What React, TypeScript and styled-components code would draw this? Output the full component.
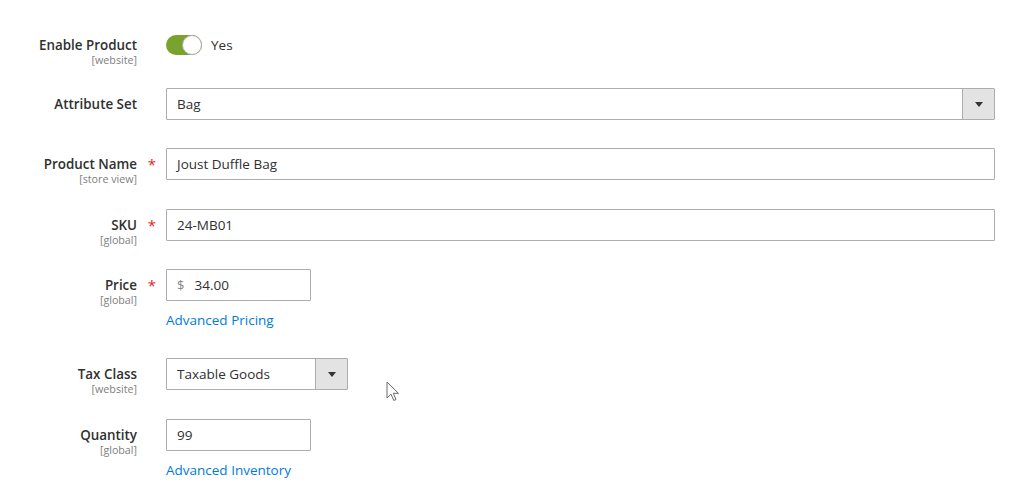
import React from "react";
import styled, { createGlobalStyle } from "styled-components";

const Global = createGlobalStyle`
  html, body { margin: 0; padding: 0; background: #fff; }
  body { font-family: "Open Sans", "Noto Sans", sans-serif; color: #303030; }
`;

const Page = styled.div`
  position: relative;
  width: 1024px;
  height: 495px;
  overflow: hidden;
  background: #fff;
  padding-top: 35px;
  box-sizing: border-box;
`;

const Form = styled.div`
  display: flex;
  flex-direction: column;
  padding-right: 29px;
`;

const Row = styled.div<{ $top: number }>`
  display: grid;
  grid-template-columns: 137px 29px 1fr;
  align-items: start;
  margin-top: ${(p) => p.$top}px;
`;

const LabelCol = styled.div<{ $offset: number }>`
  display: flex;
  flex-direction: column;
  align-items: flex-end;
  margin-top: ${(p) => p.$offset}px;
`;

const Label = styled.span`
  font-size: 13.4px;
  font-weight: 600;
  line-height: 18px;
  color: #303030;
  white-space: nowrap;
`;

const Scope = styled.span`
  font-size: 10.7px;
  line-height: 12px;
  color: #808080;
  white-space: nowrap;
`;

const Required = styled.span<{ $offset: number }>`
  margin-top: ${(p) => p.$offset}px;
  text-align: center;
  color: #e22626;
  font-size: 15px;
  line-height: 18px;
  padding-left: 1px;
`;

const Control = styled.div`
  display: flex;
  flex-direction: column;
  align-items: flex-start;
`;

const ToggleWrap = styled.div`
  display: flex;
  align-items: center;
  gap: 9px;
  height: 20px;
`;

const Track = styled.div`
  position: relative;
  width: 36px;
  height: 20px;
  border-radius: 12px;
  background: #79a22e;
  box-sizing: border-box;
`;

const Knob = styled.div`
  position: absolute;
  right: 0;
  top: 0;
  width: 20px;
  height: 20px;
  border-radius: 50%;
  background: #fff;
  border: 1px solid #adadad;
  box-sizing: border-box;
`;

const ToggleText = styled.span`
  font-size: 13.5px;
  line-height: 18px;
  color: #303030;
`;

const InputBox = styled.div<{ $width?: number }>`
  display: flex;
  align-items: center;
  box-sizing: border-box;
  height: 32px;
  width: ${(p) => (p.$width ? `${p.$width}px` : "100%")};
  border: 1px solid #adadad;
  border-radius: 1px;
  background: #fff;
  padding: 0 10px;
  font-size: 13.5px;
  color: #303030;
`;

const Prefix = styled.span`
  color: #858585;
  font-size: 13px;
  margin-right: 10px;
  margin-top: -1px;
`;

const SelectBox = styled.div<{ $width?: number }>`
  display: flex;
  align-items: stretch;
  box-sizing: border-box;
  height: 32px;
  width: ${(p) => (p.$width ? `${p.$width}px` : "100%")};
  border: 1px solid #adadad;
  border-radius: 1px;
  background: #fff;
  font-size: 13.5px;
  color: #303030;
`;

const SelectValue = styled.span`
  flex: 1;
  display: flex;
  align-items: center;
  padding: 0 10px;
`;

const SelectButton = styled.span`
  width: 31px;
  display: flex;
  align-items: center;
  justify-content: center;
  background: #e3e3e3;
  border-left: 1px solid #adadad;
`;

const Arrow = styled.span`
  width: 0;
  height: 0;
  border-left: 4px solid transparent;
  border-right: 4px solid transparent;
  border-top: 5px solid #333;
  margin-top: 1px;
`;

const Link = styled.a`
  margin-top: 10px;
  font-size: 13.5px;
  line-height: 18px;
  color: #007bdb;
  text-decoration: none;
`;

const Cursor = styled.svg`
  position: absolute;
  left: 386px;
  top: 381px;
`;

type FieldProps = {
  label: string;
  scope?: string;
  required?: boolean;
  top: number;
  labelOffset?: number;
  children: React.ReactNode;
};

function Field({ label, scope, required, top, labelOffset = 7, children }: FieldProps) {
  return (
    <Row $top={top}>
      <LabelCol $offset={labelOffset}>
        <Label>{label}</Label>
        {scope && <Scope>{scope}</Scope>}
      </LabelCol>
      {required ? <Required $offset={labelOffset}>*</Required> : <span />}
      <Control>{children}</Control>
    </Row>
  );
}

export default function App() {
  return (
    <Page>
      <Global />
      <Form>
        <Field label="Enable Product" scope="[website]" top={0} labelOffset={1}>
          <ToggleWrap>
            <Track>
              <Knob />
            </Track>
            <ToggleText>Yes</ToggleText>
          </ToggleWrap>
        </Field>
        <Field label="Attribute Set" top={22}>
          <SelectBox>
            <SelectValue>Bag</SelectValue>
            <SelectButton>
              <Arrow />
            </SelectButton>
          </SelectBox>
        </Field>
        <Field label="Product Name" scope="[store view]" required top={28}>
          <InputBox>Joust Duffle Bag</InputBox>
        </Field>
        <Field label="SKU" scope="[global]" required top={24}>
          <InputBox>24-MB01</InputBox>
        </Field>
        <Field label="Price" scope="[global]" required top={23}>
          <InputBox $width={145}>
            <Prefix>$</Prefix>34.00
          </InputBox>
          <Link>Advanced Pricing</Link>
        </Field>
        <Field label="Tax Class" scope="[website]" top={29}>
          <SelectBox $width={182}>
            <SelectValue>Taxable Goods</SelectValue>
            <SelectButton>
              <Arrow />
            </SelectButton>
          </SelectBox>
        </Field>
        <Field label="Quantity" scope="[global]" top={24}>
          <InputBox $width={145}>99</InputBox>
          <Link>Advanced Inventory</Link>
        </Field>
      </Form>
      <Cursor width="14" height="22" viewBox="0 0 14 22">
        <path
          d="M1 1 L1 17 L5 13.2 L7.8 19.5 L10 18.5 L7.3 12.3 L12.5 12.3 Z"
          fill="#fff"
          stroke="#6a6a6a"
          strokeWidth="1"
          strokeLinejoin="round"
        />
      </Cursor>
    </Page>
  );
}
